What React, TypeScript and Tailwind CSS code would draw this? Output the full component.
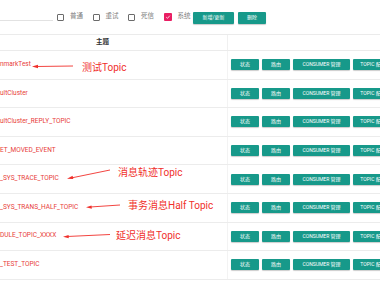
import React from 'react';

const topics = [
  'nmarkTest',
  'ultCluster',
  'ultCluster_REPLY_TOPIC',
  'ET_MOVED_EVENT',
  '_SYS_TRACE_TOPIC',
  '_SYS_TRANS_HALF_TOPIC',
  'DULE_TOPIC_XXXX',
  '_TEST_TOPIC',
];

const filters = [
  { label: '普通', checked: false },
  { label: '重试', checked: false },
  { label: '死信', checked: false },
  { label: '系统', checked: true },
];

function Box({ checked }: { checked: boolean }) {
  if (checked) {
    return (
      <span className="flex h-[8px] w-[8px] shrink-0 items-center justify-center rounded-[1px] bg-[#e91e63]">
        <svg viewBox="0 0 10 10" className="h-[6px] w-[6px]">
          <path d="M2 5.2 L4.2 7.2 L8 2.8" stroke="white" strokeWidth="1.3" fill="none" />
        </svg>
      </span>
    );
  }
  return <span className="h-[7px] w-[7px] shrink-0 rounded-[1px] border border-[#6b6b6b]" />;
}

function Btn({ children, className }: { children: React.ReactNode; className: string }) {
  return (
    <span
      className={`flex shrink-0 items-center justify-center rounded-[1px] bg-[#17998a] text-[5px] leading-none whitespace-nowrap text-white shadow-[0_1px_1px_rgba(0,0,0,0.2)] ${className}`}
    >
      {children}
    </span>
  );
}

export default function App() {
  return (
    <div className="relative h-[282px] w-[380px] overflow-hidden bg-white font-['Roboto','Noto_Sans_CJK_SC',sans-serif]">
      {/* toolbar */}
      <div className="flex h-[34px] items-center">
        <div className="mt-[6px] h-px w-[53px] shrink-0 bg-[#e2e2e2]" />
        <div className="ml-[4px] flex items-center">
          {filters.map((f) => (
            <div key={f.label} className="flex w-[35.5px] shrink-0 items-center">
              <Box checked={f.checked} />
              <span className="ml-[6px] text-[6.5px] text-[#808080]">{f.label}</span>
            </div>
          ))}
        </div>
        <div className="-ml-[6px] mt-[1px] flex gap-[4px]">
          <Btn className="h-[12px] w-[41px]">新增/更新</Btn>
          <Btn className="h-[12px] w-[28px]">删除</Btn>
        </div>
      </div>

      {/* header */}
      <div className="flex h-[17px] border-y border-[#ebebeb]">
        <div className="flex w-[228px] shrink-0 items-center justify-center border-r border-[#f0f0f0] pr-[22px] text-[6.5px] font-bold text-[#333]">
          主题
        </div>
        <div className="flex-1" />
      </div>

      {/* rows */}
      {topics.map((t) => (
        <div key={t} className="flex h-[28.6px] border-b border-[#ececec]">
          <div className="flex w-[228px] shrink-0 items-center border-r border-[#f3f3f3] text-[6.5px] text-[#e8403a]">
            {t}
          </div>
          <div className="flex items-center gap-[3px] pl-[3px]">
            <Btn className="h-[11px] w-[28px]">状态</Btn>
            <Btn className="h-[11px] w-[28px]">路由</Btn>
            <Btn className="h-[11px] w-[57px]">CONSUMER 管理</Btn>
            <Btn className="h-[11px] w-[40px]">TOPIC 配置</Btn>
          </div>
        </div>
      ))}

      {/* annotations */}
      <svg className="absolute left-0 top-0 h-[282px] w-[380px]" viewBox="0 0 380 282">
        <g stroke="#f0302b" fill="#f0302b" strokeWidth="0.9">
          <line x1="36" y1="66.5" x2="73" y2="66" />
          <path d="M32 66.5 L38 64.8 L38 68.2 Z" stroke="none" />
          <line x1="71" y1="178" x2="110" y2="170" />
          <path d="M67 178.8 L72.6 175.8 L73.3 179 Z" stroke="none" />
          <line x1="90" y1="207" x2="120" y2="205" />
          <path d="M86 207.3 L91.5 205.5 L91.8 208.8 Z" stroke="none" />
          <line x1="67" y1="236.5" x2="110" y2="234.5" />
          <path d="M63 236.7 L68.6 234.9 L68.8 238.2 Z" stroke="none" />
        </g>
      </svg>
      <span className="absolute left-[82px] top-[63px] text-[10px] leading-none text-[#f0302b]">测试Topic</span>
      <span className="absolute left-[118px] top-[168px] text-[10px] leading-none text-[#f0302b]">消息轨迹Topic</span>
      <span className="absolute left-[128px] top-[201px] text-[10px] leading-none text-[#f0302b]">事务消息Half Topic</span>
      <span className="absolute left-[116px] top-[231px] text-[10px] leading-none text-[#f0302b]">延迟消息Topic</span>
    </div>
  );
}
